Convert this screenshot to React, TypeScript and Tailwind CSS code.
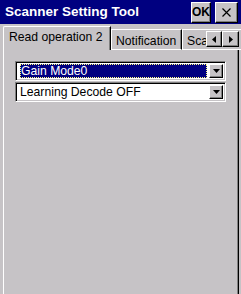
import React from "react";

const raised =
  "border border-t-white border-l-white border-r-black border-b-black shadow-[inset_-1px_-1px_0_#808080]";

function DownArrow() {
  return (
    <svg width="7" height="4" viewBox="0 0 7 4">
      <path d="M0 0h7L3.5 4z" fill="#000" />
    </svg>
  );
}

function ComboBox({ text, selected }: { text: string; selected?: boolean }) {
  return (
    <div className="flex h-[20px] w-[211px] border border-t-[#808080] border-l-[#808080] border-b-white border-r-white bg-white shadow-[inset_1px_1px_0_#000,inset_-1px_-1px_0_#c6c3c6] p-[2px]">
      <div className="flex-1 flex items-center pl-[2px] pr-[2px] min-w-0">
        <div
          className={
            selected
              ? "flex-1 h-[14px] flex items-center bg-[#000080] text-white outline outline-1 outline-dotted outline-[#ffff80] -outline-offset-1 pl-[1px] leading-none"
              : "flex-1 h-[14px] flex items-center text-black leading-none"
          }
        >
          {text}
        </div>
      </div>
      <div className={`w-[14px] h-full flex items-center justify-center bg-[#c6c3c6] ${raised}`}>
        <DownArrow />
      </div>
    </div>
  );
}

export default function App() {
  return (
    <div className="w-[241px] h-[294px] bg-[#c6c3c6] flex flex-col overflow-hidden font-['Liberation_Sans',Arial,sans-serif] text-[12.2px] text-black">
      {/* title bar */}
      <div className="h-[24px] bg-[#000080] flex items-center pl-[5px] pr-[3px]">
        <span className="text-white font-bold text-[13.5px] leading-none flex-1">Scanner Setting Tool</span>
        <div className={`w-[20px] h-[21px] flex items-center justify-center bg-[#c6c3c6] font-bold text-[12px] leading-none ${raised}`}>
          OK
        </div>
        <div className={`ml-[4px] w-[23px] h-[21px] flex items-center justify-center bg-[#c6c3c6] ${raised}`}>
          <svg width="9" height="9" viewBox="0 0 9 9">
            <path d="M0.5 0.5L8.5 8.5M8.5 0.5L0.5 8.5" stroke="#000" strokeWidth="1.2" />
          </svg>
        </div>
      </div>

      {/* tabs */}
      <div className="relative h-[26px] pt-[2px] flex items-end">
        <div className="w-[3px] h-[1px] mb-0" />
        <div className="w-[108px] h-[24px] border-t border-l border-t-white border-l-white border-r border-r-black shadow-[inset_-1px_0_0_#808080] rounded-tl-[2px] pl-[5px] pt-[4px] leading-none whitespace-nowrap">
          Read operation 2
        </div>
        <div className="w-[71px] h-[21px] border-t border-l border-r border-b border-t-white border-l-white border-r-black border-b-white shadow-[inset_-1px_0_0_#808080] pl-[4px] pt-[5px] leading-none whitespace-nowrap">
          Notification
        </div>
        <div className="flex-1 h-[21px] border-t border-l border-b border-t-white border-l-white border-b-white pl-[4px] pt-[5px] leading-none whitespace-nowrap overflow-hidden">
          Scanner
        </div>
        <div className="absolute left-[206px] top-[7px] flex">
          <div className={`w-[16px] h-[16px] flex items-center justify-center bg-[#c6c3c6] ${raised}`}>
            <svg width="4" height="7" viewBox="0 0 4 7">
              <path d="M4 0v7L0 3.5z" fill="#000" />
            </svg>
          </div>
          <div className={`w-[17px] h-[16px] flex items-center justify-center bg-[#c6c3c6] ${raised}`}>
            <svg width="4" height="7" viewBox="0 0 4 7">
              <path d="M0 0v7L4 3.5z" fill="#000" />
            </svg>
          </div>
        </div>
      </div>

      {/* panel */}
      <div className="flex-1 ml-[3px] w-[236px] border-l border-l-white border-r border-r-black shadow-[inset_-1px_0_0_#808080] pt-[11px] pl-[11px] flex flex-col gap-[1px]">
        <ComboBox text="Gain Mode0" selected />
        <ComboBox text="Learning Decode OFF" />
      </div>
    </div>
  );
}
